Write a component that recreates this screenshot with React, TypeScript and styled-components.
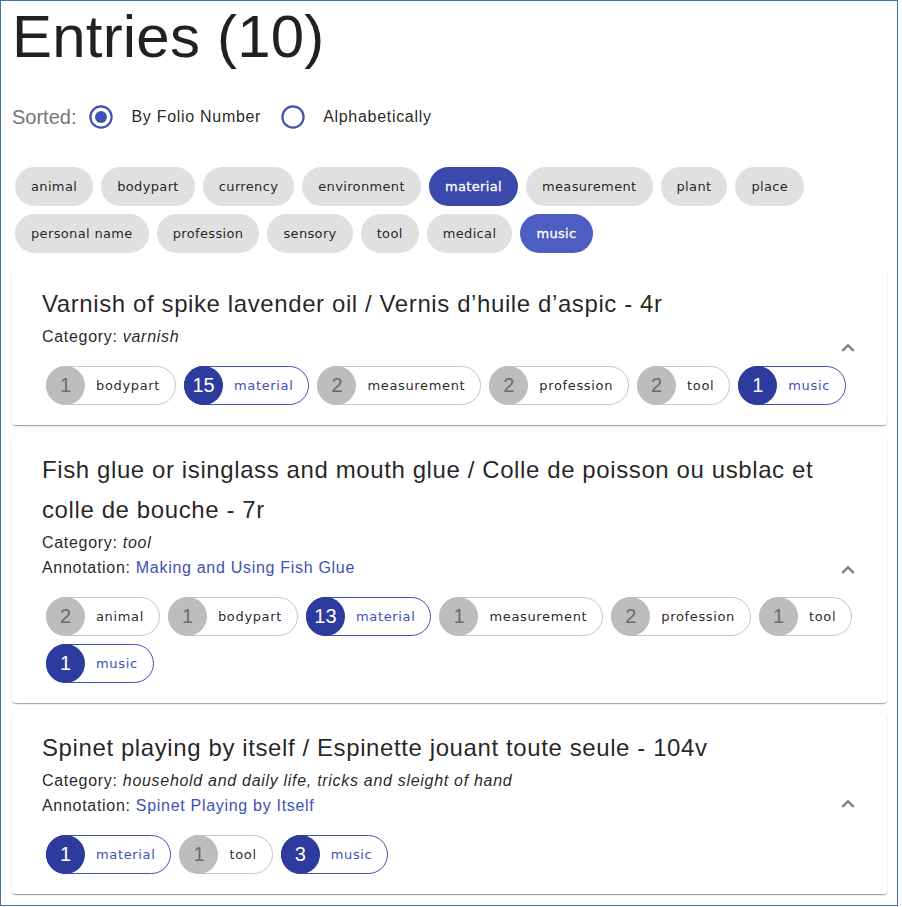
import React from 'react';
import styled, { createGlobalStyle } from 'styled-components';

const GlobalStyle = createGlobalStyle`
  html, body { margin: 0; padding: 0; background: #fff; }
  body { font-family: "Liberation Sans", Arial, sans-serif; color: rgba(0,0,0,0.87); }
`;

const Frame = styled.div`
  box-sizing: border-box;
  width: 898px;
  height: 906px;
  border: 1px solid #4472a8;
  padding: 1px 10px 0 11px;
  overflow: hidden;
  background: #fff;
`;

const Heading = styled.h1`
  margin: 0;
  font-size: 60px;
  font-weight: 400;
  line-height: 70px;
  letter-spacing: 0.2px;
  color: rgba(0, 0, 0, 0.87);
`;

const SortRow = styled.div`
  display: flex;
  align-items: center;
  height: 42px;
  margin-top: 24px;
`;

const SortTitle = styled.span`
  font-size: 20px;
  color: #757575;
  margin-right: 13px;
`;

const RadioSvg = styled.svg`
  flex: none;
  width: 24px;
  height: 24px;
  color: #3f51b5;
`;

const RadioLabel = styled.span<{ $last?: boolean }>`
  font-size: 16px;
  letter-spacing: 0.7px;
  color: rgba(0, 0, 0, 0.87);
  margin: 0 ${(p) => (p.$last ? 0 : 20)}px 0 18px;
`;

const FilterWrap = styled.div`
  display: flex;
  flex-wrap: wrap;
  margin: 25px 0 0 -1px;
`;

const FilterChip = styled.span<{ $on?: boolean; $bg?: string }>`
  box-sizing: border-box;
  display: inline-flex;
  align-items: center;
  height: 39px;
  margin: 4px;
  padding: 0 16px;
  border-radius: 20px;
  background: ${(p) => (p.$on ? p.$bg || '#3f51b5' : '#e0e0e0')};
  color: ${(p) => (p.$on ? '#fff' : 'rgba(0,0,0,0.87)')};
  font-family: "DejaVu Sans", Verdana, sans-serif;
  font-size: 13px;
  letter-spacing: 0.35px;
  font-weight: ${(p) => (p.$on ? 500 : 400)};
  -webkit-text-stroke: ${(p) => (p.$on ? '0.3px #fff' : '0')};
`;

const CardList = styled.div`
  display: flex;
  flex-direction: column;
  gap: 11px;
  margin-top: 13px;
`;

const Card = styled.div`
  position: relative;
  padding: 14px 24px 16px 30px;
  border-radius: 4px;
  background: #fff;
  box-shadow: 0px 2px 1px -1px rgba(0, 0, 0, 0.2), 0px 1px 1px 0px rgba(0, 0, 0, 0.14),
    0px 1px 3px 0px rgba(0, 0, 0, 0.12);
`;

const Title = styled.h2`
  margin: 0;
  font-size: 24px;
  font-weight: 400;
  letter-spacing: 0.6px;
  line-height: 40px;
  color: rgba(0, 0, 0, 0.87);
`;

const Meta = styled.div`
  font-size: 16px;
  letter-spacing: 0.7px;
  line-height: 25px;
  color: rgba(0, 0, 0, 0.87);
  em { font-style: italic; }
`;

const Link = styled.a`
  color: #3f51b5;
  text-decoration: none;
`;

const ChipRow = styled.div`
  display: flex;
  flex-wrap: wrap;
  margin-top: 13px;
`;

const CountChip = styled.span<{ $primary?: boolean }>`
  box-sizing: border-box;
  display: inline-flex;
  align-items: center;
  height: 39px;
  margin: 4px;
  border: 1px solid ${(p) => (p.$primary ? '#3f51b5' : '#c6c6c6')};
  border-radius: 20px;
`;

const Avatar = styled.span<{ $primary?: boolean }>`
  flex: none;
  display: flex;
  align-items: center;
  justify-content: center;
  width: 39px;
  height: 39px;
  margin: -1px 0 -1px -1px;
  border-radius: 50%;
  background: ${(p) => (p.$primary ? '#2e3b9e' : '#bdbdbd')};
  color: ${(p) => (p.$primary ? '#fff' : '#6b6b6b')};
  font-size: 20px;
`;

const ChipLabel = styled.span<{ $primary?: boolean }>`
  padding: 0 15px 0 11px;
  font-family: "DejaVu Sans", Verdana, sans-serif;
  font-size: 13px;
  letter-spacing: 0.65px;
  color: ${(p) => (p.$primary ? '#3f51b5' : 'rgba(0,0,0,0.87)')};
`;

const ExpandButton = styled.span`
  position: absolute;
  right: 15px;
  top: 50%;
  transform: translateY(-50%);
  display: flex;
  align-items: center;
  justify-content: center;
  width: 48px;
  height: 48px;
  color: rgba(0, 0, 0, 0.54);
`;

const Radio = ({ checked }: { checked?: boolean }) => (
  <RadioSvg viewBox="0 0 24 24">
    <circle cx="12" cy="12" r="10.6" fill="none" stroke="currentColor" strokeWidth="2.2" />
    {checked && <circle cx="12" cy="12" r="6" fill="currentColor" />}
  </RadioSvg>
);

const ExpandLess = () => (
  <svg width="26" height="26" viewBox="0 0 24 24" fill="currentColor">
    <path d="M12 8l-6 6 1.41 1.41L12 10.83l4.59 4.58L18 14z" />
  </svg>
);

type Tag = [number, string];

const filters: { label: string; on?: boolean; bg?: string }[] = [
  { label: 'animal' },
  { label: 'bodypart' },
  { label: 'currency' },
  { label: 'environment' },
  { label: 'material', on: true, bg: '#3a49ab' },
  { label: 'measurement' },
  { label: 'plant' },
  { label: 'place' },
  { label: 'personal name' },
  { label: 'profession' },
  { label: 'sensory' },
  { label: 'tool' },
  { label: 'medical' },
  { label: 'music', on: true, bg: '#4d5dc1' },
];

const highlighted = new Set(['material', 'music']);

const entries: { title: string; category: string; annotation?: string; tags: Tag[] }[] = [
  {
    title: 'Varnish of spike lavender oil / Vernis d\u2019huile d\u2019aspic - 4r',
    category: 'varnish',
    tags: [
      [1, 'bodypart'],
      [15, 'material'],
      [2, 'measurement'],
      [2, 'profession'],
      [2, 'tool'],
      [1, 'music'],
    ],
  },
  {
    title: 'Fish glue or isinglass and mouth glue / Colle de poisson ou usblac et colle de bouche - 7r',
    category: 'tool',
    annotation: 'Making and Using Fish Glue',
    tags: [
      [2, 'animal'],
      [1, 'bodypart'],
      [13, 'material'],
      [1, 'measurement'],
      [2, 'profession'],
      [1, 'tool'],
      [1, 'music'],
    ],
  },
  {
    title: 'Spinet playing by itself / Espinette jouant toute seule - 104v',
    category: 'household and daily life, tricks and sleight of hand',
    annotation: 'Spinet Playing by Itself',
    tags: [
      [1, 'material'],
      [1, 'tool'],
      [3, 'music'],
    ],
  },
];

export default function App() {
  return (
    <>
      <GlobalStyle />
      <Frame>
        <Heading>Entries (10)</Heading>
        <SortRow>
          <SortTitle>Sorted:</SortTitle>
          <Radio checked />
          <RadioLabel>By Folio Number</RadioLabel>
          <Radio />
          <RadioLabel $last>Alphabetically</RadioLabel>
        </SortRow>
        <FilterWrap>
          {filters.map((f) => (
            <FilterChip key={f.label} $on={f.on} $bg={f.bg}>
              {f.label}
            </FilterChip>
          ))}
        </FilterWrap>
        <CardList>
          {entries.map((e) => (
            <Card key={e.title}>
              <Title>{e.title}</Title>
              <Meta>
                Category: <em>{e.category}</em>
              </Meta>
              {e.annotation && (
                <Meta>
                  Annotation: <Link href="#">{e.annotation}</Link>
                </Meta>
              )}
              <ChipRow>
                {e.tags.map(([n, label]) => {
                  const p = highlighted.has(label);
                  return (
                    <CountChip key={label} $primary={p}>
                      <Avatar $primary={p}>{n}</Avatar>
                      <ChipLabel $primary={p}>{label}</ChipLabel>
                    </CountChip>
                  );
                })}
              </ChipRow>
              <ExpandButton>
                <ExpandLess />
              </ExpandButton>
            </Card>
          ))}
        </CardList>
      </Frame>
    </>
  );
}
